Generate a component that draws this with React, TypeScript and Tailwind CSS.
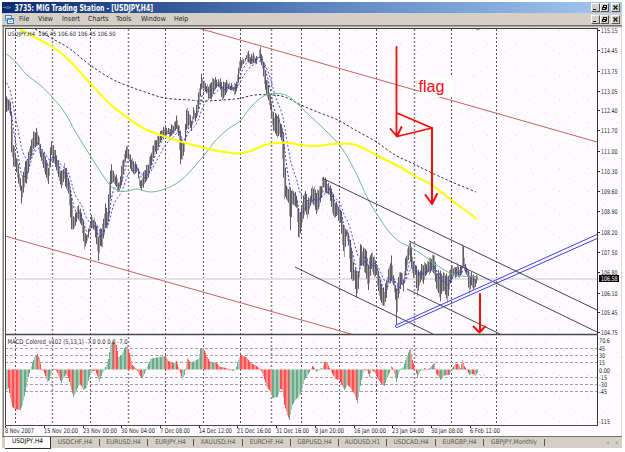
import React from "react";

type Pt = [number, number];

// x, high, low of the candles, flattened in triples
const PRICE = [
  5,97,113, 8,97,112, 10,100,118, 11,113,155, 13,143,165, 15,152,166, 18,163,184, 20,178,192, 21,184,205, 24,165,190, 27,157,178, 30,143,160, 33,133,150, 36,129,148, 38,133,148, 41,148,160, 44,153,172, 48,167,186, 50,148,170, 51,140,158, 54,148,163, 58,162,178, 61,172,190, 64,163,182, 68,176,193, 71,195,230, 73,215,231, 75,213,228, 78,205,218, 81,212,225, 84,225,250, 86,235,245, 88,230,240, 91,216,226, 94,218,230, 97,225,252, 98,235,262, 100,228,248, 102,225,250, 105,204,225, 107,209,228, 109,180,215, 111,164,185, 113,172,184, 116,175,190, 119,182,191, 122,160,182, 124,155,168, 126,144,160, 128,148,162, 131,158,170, 134,162,175, 137,164,172, 139,175,188, 141,180,193, 144,170,183, 148,162,178, 152,146,163, 156,138,152, 159,134,144, 162,127,139, 165,127,138, 168,129,136, 171,125,135, 174,122,133, 176,117,130, 178,123,138, 180,130,167, 182,142,158, 184,140,151, 186,108,130, 189,112,126, 191,120,133, 193,108,122, 195,110,120, 197,100,114, 199,88,104, 201,75,90, 203,80,90, 206,83,96, 209,86,97, 211,80,99, 214,77,92, 217,79,88, 220,80,92, 222,84,99, 225,80,95, 228,81,90, 230,84,92, 233,85,94, 235,83,93, 237,75,88, 239,58,74, 242,59,67, 245,59,64, 247,50,60, 250,54,64, 253,54,64, 256,57,65, 258,55,60, 260,46,60, 262,56,68, 264,64,84, 266,78,96, 268,84,102, 270,96,112, 272,108,128, 274,116,130, 277,114,138, 279,117,135, 281,125,142, 283,129,180, 284,145,202, 286,187,198, 288,187,202, 290,188,230, 292,190,205, 294,190,207, 296,194,210, 298,208,240, 300,213,232, 302,200,222, 305,188,212, 307,200,220, 309,198,212, 312,185,202, 314,187,205, 316,190,214, 319,188,208, 321,184,200, 323,176,190, 326,179,192, 329,185,195, 332,190,214, 334,200,220, 337,203,218, 340,208,222, 342,217,245, 344,228,258, 346,228,238, 348,232,248, 350,240,275, 352,255,280, 354,268,280, 356,270,298, 358,272,290, 360,241,268, 362,250,268, 365,247,272, 368,262,290, 371,250,270, 374,258,280, 376,262,278, 378,270,290, 380,280,300, 382,285,306, 384,290,307, 386,280,300, 388,270,285, 391,256,280, 393,272,285, 395,285,300, 396,290,326, 398,275,300, 401,270,287, 403,278,290, 405,258,275, 407,250,265, 409,241,256, 411,246,270, 413,262,280, 415,262,278, 417,270,295, 419,272,285, 421,265,280, 423,263,285, 425,262,278, 428,260,275, 431,257,270, 434,253,275, 436,272,290, 438,270,295, 440,272,304, 442,275,290, 444,272,290, 447,275,303, 450,268,285, 452,265,280, 454,268,277, 457,263,275, 459,267,278, 461,264,275, 462,246,270, 463,246,268, 465,265,275, 467,268,280, 469,274,292, 471,272,285, 473,276,290, 475,277,288, 477,275,282,
];

// x and tip of each histogram bar, flattened in pairs
const MACD = [
  5,391, 8,388, 10,398, 12,407, 14,409, 20,410, 22,405, 25,392, 28,377, 30,369, 32,363, 34,357, 37,354, 39,358, 41,369, 43,371, 45,376, 47,382, 49,380, 51,373, 53,369, 55,369, 57,373, 61,383, 63,378, 66,374, 68,378, 70,386, 73,397, 75,393, 78,386, 80,384, 83,390, 86,388, 89,377, 92,371, 95,371, 97,376, 99,382, 101,376, 104,369, 107,363, 108,359, 110,345, 113,341, 116,345, 118,357, 121,355, 124,348, 127,345, 129,353, 132,365, 136,369, 139,375, 142,379, 144,374, 147,366, 150,359, 153,358, 160,357, 165,356, 168,361, 173,363, 176,361, 179,370, 182,380, 184,375, 187,358, 190,363, 194,361, 198,359, 200,349, 203,348, 206,355, 210,363, 215,362, 220,367, 226,368, 232,371, 235,370, 238,360, 240,355, 243,356, 246,357, 250,363, 256,366, 260,369, 263,376, 266,386, 270,392, 272,398, 277,397, 280,389, 282,390, 284,405, 287,415, 289,420, 292,405, 295,400, 298,397, 301,392, 304,380, 308,374, 312,366, 314,368, 316,372, 319,369, 322,368, 324,362, 327,363, 329,368, 332,374, 335,379, 339,380, 341,384, 344,390, 347,385, 350,388, 354,394, 357,403, 359,392, 361,380, 364,369, 367,371, 369,377, 371,370, 374,372, 378,380, 382,385, 384,386, 386,380, 389,373, 391,366, 393,369, 396,382, 398,375, 400,369, 403,367, 406,357, 410,348, 412,360, 415,370, 417,377, 420,371, 424,368, 427,370, 430,367, 434,363, 436,374, 438,376, 440,380, 443,376, 446,375, 449,375, 452,368, 455,364, 458,364, 460,368, 462,360, 464,366, 467,371, 469,375, 472,374, 475,376, 478,371,
];

function sample(data: number[], stride: number, col: number, x: number) {
  for (let i = 0; i + stride < data.length; i += stride) {
    const a = data[i];
    const b = data[i + stride];
    if (x <= b) {
      const t = Math.max(0, (x - a) / (b - a));
      return data[i + col] + t * (data[i + stride + col] - data[i + col]);
    }
  }
  return data[data.length - stride + col];
}

const xs: number[] = Array.from({ length: 473 }, (_, i) => i + 5);

const bars = xs.map((x) => {
  const noise = ((x * 37) % 11) / 11;
  const noise2 = ((x * 53) % 13) / 13;
  const dark = (x * 7) % 5 < 3;
  return {
    x,
    hi: sample(PRICE, 3, 1, x) + noise * 5 - 1.5,
    lo: sample(PRICE, 3, 2, x) - noise2 * 5 + 1.5,
    dark,
  };
});

function average(start: number, span: number) {
  let v = start;
  return bars
    .map((b) => {
      v += ((b.hi + b.lo) / 2 - v) * (2 / (span + 1));
      return `${b.x},${v.toFixed(1)}`;
    })
    .join(" ");
}

const histogram = xs.map((x) => {
  const y = sample(MACD, 2, 1, x);
  const rising = sample(MACD, 2, 1, x + 1) < y;
  const strong = x % 4 < 2;
  const color = rising ? (strong ? "#70a98a" : "#a3cdb6") : strong ? "#ff5050" : "#ff8f8f";
  return { x, y, color };
});

function smooth(p: Pt[]) {
  let d = `M${p[0][0]} ${p[0][1]}`;
  for (let i = 0; i < p.length - 1; i++) {
    const a = p[Math.max(0, i - 1)];
    const b = p[i];
    const c = p[i + 1];
    const e = p[Math.min(p.length - 1, i + 2)];
    d += `C${b[0] + (c[0] - a[0]) / 6} ${b[1] + (c[1] - a[1]) / 6} ${c[0] - (e[0] - b[0]) / 6} ${c[1] - (e[1] - b[1]) / 6} ${c[0]} ${c[1]}`;
  }
  return d;
}

const YELLOW: Pt[] = [[20,29],[36,38],[53,47],[70,61],[90,83],[110,104],[128,118],[145,129],[165,136.5],[182,142],[209,149],[225,152],[237,153.5],[251,151],[265,145],[278,143],[290,143],[300,145],[315,146],[335,144],[352,144],[365,149],[380,157],[400,167],[415,176],[432,185],[450,199],[477,219]];
const GREEN: Pt[] = [[5,53],[15,61],[27,75],[40,85],[53,98],[65,113],[75,131],[86,149],[100,171],[110,185],[120,191],[128,191],[137,189],[150,192],[165,189],[180,181],[195,166],[209,149],[215,141],[228,129],[240,121],[250,108],[262,97],[270,94],[282,94],[292,99],[310,116],[325,130],[341,147],[355,171],[368,199],[380,219],[390,233],[400,242],[408,246],[420,253],[435,264],[450,273],[462,276],[477,277]];
const BLACK: Pt[] = [[35,29],[53,39],[70,49],[90,65],[110,78],[128,86],[145,92],[165,98],[190,100],[203,101],[235,99],[255,95],[272,95],[285,97],[301,105],[320,113],[338,120],[355,130],[375,141],[395,155],[412,163],[432,173],[452,182],[476,192]];

const GRID = [15, 52.5, 90, 128, 165, 203, 240, 271, 301, 339, 376, 414, 451, 496];
const WIDE = [52.5, 271, 128, 414];

const PRICES: [string, number][] = [["115.15",30],["114.45",50],["113.75",71],["113.05",91],["112.40",110],["111.70",130],["111.00",151],["110.30",171],["109.60",191],["108.90",211],["108.20",232],["107.50",252],["106.80",272],["106.10",293],["105.45",312],["104.75",332]];
const LEVELS: [string, number][] = [["70.6",340],["45",348],["30",355],["15",362],["0.00",370],["-15",377],["-30",384],["-45",391],["-115",421]];
const DATES: [string, number, number][] = [["8 Nov 2007",5,29],["15 Nov 20:00",44,34],["23 Nov 00:00",83,34],["30 Nov 04:00",121,34],["7 Dec 08:00",160,30],["14 Dec 12:00",199,33],["21 Dec 16:00",237,34],["31 Dec 16:00",276,33],["8 Jan 20:00",315,29],["16 Jan 00:00",354,32],["23 Jan 04:00",392,32],["30 Jan 08:00",431,32],["6 Feb 12:00",470,30]];

const MENUS: [string, string][] = [["File","w-[19px]"],["View","w-6"],["Insert","w-[26px]"],["Charts","w-7"],["Tools","w-[25px]"],["Window","w-[33px]"],["Help","w-5"]];
const TABS: [string, string][] = [["USDCHF,H4","w-[49px]"],["EURUSD,H4","w-[48px]"],["EURJPY,H4","w-[46px]"],["XAUUSD,H4","w-[49px]"],["EURCHF,H4","w-[48px]"],["GBPUSD,H4","w-[48px]"],["AUDUSD,H1","w-[48px]"],["USDCAD,H4","w-[49px]"],["EURGBP,H4","w-[48px]"],["GBPJPY,Monthly","w-[61px]"]];

function Controls() {
  return (
    <div className="flex">
      {["min", "restore", "close"].map((k) => (
        <span
          key={k}
          className={
            "flex h-[9px] w-[9px] items-center justify-center border border-t-white border-l-white border-r-[#555] border-b-[#555] bg-[#d4d0c8] " +
            (k === "close" ? "ml-[2px]" : "")
          }
        >
          <svg width="7" height="7" viewBox="0 0 7 7" fill="none" stroke="#111" shapeRendering="crispEdges">
            {k === "min" && <path d="M1 5.5H4" />}
            {k === "restore" && <path d="M2.5 2.5V1.5H5.5V4.5H4.5M1.5 3.5H4.5V5.5H1.5Z" />}
            {k === "close" && <path d="M1.5 1.5L5.5 5.5M5.5 1.5L1.5 5.5" shapeRendering="auto" strokeWidth="1.2" />}
          </svg>
        </span>
      ))}
    </div>
  );
}

function Chart() {
  return (
    <svg
      width="620"
      height="411"
      viewBox="2 25 620 411"
      className="block font-['DejaVu_Sans_Condensed','DejaVu_Sans',sans-serif]"
      fill="none"
    >
      <defs>
        <pattern id="dither" width="29" height="23" patternUnits="userSpaceOnUse">
          <path d="M3 4.5h1M17 2.5h1M25 9.5h1M10 12.5h1M20 17.5h1M5 20.5h1M12 5.5h1" stroke="#f6f0b4" />
          <path d="M8 7.5h1M23 20.5h1" stroke="#dedbe0" />
        </pattern>
        <clipPath id="main"><rect x="5" y="29" width="592" height="305" /></clipPath>
      </defs>
      <rect x="2" y="25" width="620" height="411" fill="#fdfbff" />
      <rect x="5" y="29" width="617" height="405" fill="url(#dither)" />
      <rect x="2" y="25" width="620" height="1" fill="#77746f" />
      <rect x="2" y="26" width="620" height="1" fill="#a5a29d" />
      <rect x="2" y="27" width="620" height="1" fill="#e4e1dc" />
      <rect x="2" y="26" width="1" height="410" fill="#bbb8b3" />
      <rect x="3" y="26" width="1" height="410" fill="#85827e" />
      <rect x="621" y="27" width="1" height="409" fill="#dedbd7" />

      {GRID.map((x) => (
        <line
          key={x}
          x1={Math.floor(x) + 0.5}
          x2={Math.floor(x) + 0.5}
          y1="29"
          y2="425"
          stroke={WIDE.includes(x) ? "#8e8083" : "#5a4e51"}
          strokeWidth={WIDE.includes(x) ? 1.5 : 1}
          strokeDasharray="2 2"
        />
      ))}
      {[348.5, 355.5, 362.5, 377.5, 384.5, 391.5].map((y) => (
        <line key={y} x1="5" x2="597" y1={y} y2={y} stroke="#a89ea2" strokeDasharray="3 2" />
      ))}
      <rect x="5" y="278" width="592" height="2" fill="#e2e0e2" />

      <g clipPath="url(#main)">
        {bars.map((b) => (
          <rect key={b.x} x={b.x} y={b.lo < b.hi ? b.lo : b.hi} width="1" height={Math.max(1, Math.abs(b.lo - b.hi))} fill={b.dark ? "#605e63" : "#a29fa4"} />
        ))}
        <polyline points={average(95, 8)} stroke="#3434c8" strokeDasharray="2 2" />
        <polyline points={average(76, 19)} stroke="#4a4ad0" strokeDasharray="2 2" />
        <path d={smooth(BLACK)} stroke="#393538" strokeDasharray="2.5 2" />
        <path d={smooth(GREEN)} stroke="#74b790" />
        <path d="M198 28L597 142M5 236L351 334" stroke="#c96060" />
        <path d="M322 178L597 310M409 241L597 332M295 267L433 334M407 289L500 334" stroke="#484448" />
        <path d="M395 325.5L597 234.5M397 327.5L597 238.5M395 326L397 328" stroke="#4040dc" />
        <path d={smooth(YELLOW)} stroke="#ffff00" strokeWidth="2" />
      </g>

      {histogram.map((h) => (
        <rect key={h.x} x={h.x} y={Math.min(369.5, h.y)} width="1" height={Math.max(0.8, Math.abs(h.y - 369.5))} fill={h.color} />
      ))}
      <path d="M479 374l2 2m2-2l2 2" stroke="#d4d2d4" />

      <path d="M5 28.5H597.5" stroke="#3c3a3d" />
      <path d="M5.5 28V425.5H597.5" stroke="#4d484b" />
      <path d="M597.5 28V426" stroke="#353236" />
      <path d="M5 334.5H598" stroke="#49474a" strokeWidth="1.7" />
      <path d="M475 29h6l-3 2z" fill="#b7b4b7" />

      <rect x="419" y="77" width="34" height="20" fill="#fff" />
      <text x="418.5" y="92" fontSize="16" textLength="26" lengthAdjust="spacingAndGlyphs" fill="#fb0814" className="font-['Liberation_Sans',Arial,sans-serif]">flag</text>

      <g stroke="#fb0a0a" strokeWidth="2" strokeLinecap="round" strokeLinejoin="round">
        <path d="M396.5 47V136M390.5 129L397 136.5L401.5 127M397 136.5L432 128L397 113" strokeWidth="1.8" />
        <path d="M432 128V204M425.5 195L432 204L437 194" />
        <path d="M480 294V332M473.5 326.5L479.5 332.5L485 326.5" />
      </g>

      <g fill="#2a282b" fontSize="6.5">
        <text x="7.5" y="35.5" fontSize="6" textLength="108" lengthAdjust="spacingAndGlyphs">USDJPY,H4&#160; 106.45 106.60 106.45 106.50</text>
        <text x="7.5" y="343.8" textLength="120" lengthAdjust="spacingAndGlyphs">MACD_Colored_v102 (5,13,1) -7.0 0.0 0.0 -7.0</text>
        {PRICES.map(([t, y]) => (
          <g key={t}>
            <rect x="598" y={y} width="2" height="1" />
            <text x="601" y={y + 2.7} textLength="16.5" lengthAdjust="spacingAndGlyphs">{t}</text>
          </g>
        ))}
        {LEVELS.map(([t, y]) => (
          <text key={t} x="599" y={y + 2.6} textLength={t.length === 2 ? 6 : t.length === 3 ? 8 : 11} lengthAdjust="spacingAndGlyphs">{t}</text>
        ))}
        {DATES.map(([t, x, w]) => (
          <g key={t}>
            <rect x={x} y="426" width="1" height="2" />
            <text x={x} y="432.8" textLength={w} lengthAdjust="spacingAndGlyphs">{t}</text>
          </g>
        ))}
      </g>
      <rect x="599" y="275" width="20" height="7" fill="#050505" />
      <text x="601" y="281" fontSize="6.5" textLength="16.5" lengthAdjust="spacingAndGlyphs" fill="#fff">106.58</text>
    </svg>
  );
}

export default function App() {
  return (
    <div className="h-[452px] w-[625px] overflow-hidden bg-white pt-[2px] pl-[2px] font-['DejaVu_Sans_Condensed','DejaVu_Sans',sans-serif] text-[#252326]">
      <div className="flex w-[620px] flex-col">
        <header className="flex h-[11px] items-center justify-between bg-linear-to-r from-[#0b2a6d] via-[#5a82bf] to-[#a6caf0] pr-[2px]">
          <div className="flex items-center gap-[3px] pl-px">
            <svg width="8" height="7" viewBox="0 0 8 7" stroke="#6d86bd" fill="none">
              <path d="M0 3.5H3M4 2V5M6 2V5M7 3.5H8" />
            </svg>
            <svg width="170" height="11" viewBox="0 0 170 11" overflow="visible">
              <text x="0.5" y="8.6" fontSize="8" fontWeight="bold" fill="#fff" textLength="138.5" lengthAdjust="spacingAndGlyphs" className="font-['DejaVu_Sans_Condensed','DejaVu_Sans',sans-serif]">
                3735: MIG Trading Station - [USDJPY,H4]
              </text>
            </svg>
          </div>
          <Controls />
        </header>
        <div className="flex h-3 items-center justify-between bg-[#d4d0c8] pr-[2px]">
          <nav className="flex items-center text-[7px] leading-[12px]">
            <svg className="mr-[5px] ml-[3px]" width="9" height="9" viewBox="0 0 9 9">
              <rect x="0.5" y="0.5" width="6" height="5" fill="#dcecff" stroke="#4c87cb" />
              <rect x="2.5" y="3.5" width="6" height="5" fill="#fff" stroke="#3978c4" />
              <path d="M3 4.5h5M4 7l1-1 1 1 1-1" stroke="#72a8e5" fill="none" />
            </svg>
            <div className="flex">
              {MENUS.map(([m, w]) => (
                <span key={m} className={"whitespace-nowrap " + w}>{m}</span>
              ))}
            </div>
          </nav>
          <Controls />
        </div>
        <Chart />
        <footer className="flex h-3 items-center border-t border-[#77736f] bg-[#d4d0c8] text-[6.5px] text-[#5c5955]">
          <div className="ml-[3px] flex h-3 w-[46px] items-center justify-center border-r border-b border-[#333] bg-white text-black">USDJPY,H4</div>
          {TABS.map(([t, w]) => (
            <div key={t} className={"flex h-[7px] items-center justify-center border-r border-[#555] whitespace-nowrap " + w}>{t}</div>
          ))}
          <div className="ml-auto flex gap-[7px] pr-1 text-[5px] text-[#99958e]">
            <span>◂</span>
            <span>▸</span>
          </div>
        </footer>
      </div>
    </div>
  );
}
